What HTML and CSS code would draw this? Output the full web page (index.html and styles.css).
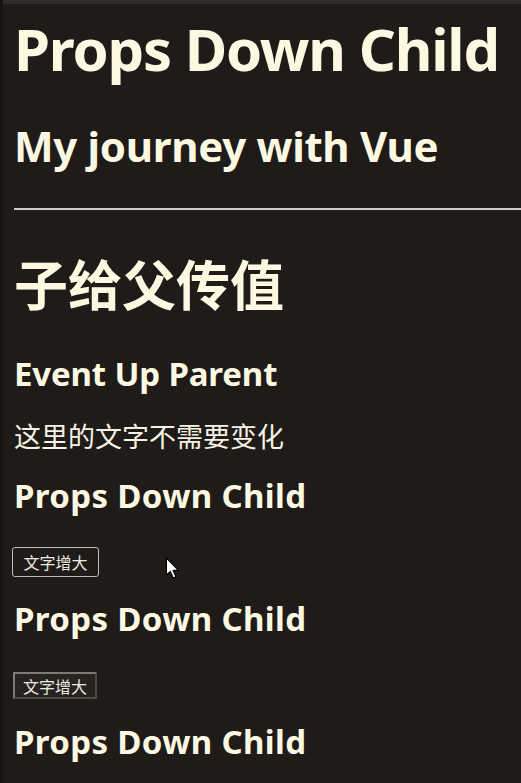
FILE: index.html
```html
<!DOCTYPE html>
<html lang="zh">
<head>
<meta charset="utf-8">
<title>Props Down Child</title>
<link rel="stylesheet" href="styles.css">
</head>
<body>
<div class="topbar"></div>
<main class="page">
  <h1 class="title">Props Down Child</h1>
  <h2 class="subtitle">My journey with Vue</h2>
  <hr class="rule">
  <h2 class="zh-title">子给父传值</h2>
  <h3 class="sec">Event Up Parent</h3>
  <p class="note">这里的文字不需要变化</p>
  <h3 class="sec child first">Props Down Child</h3>
  <button class="btn btn-round">文字增大</button>
  <h3 class="sec child">Props Down Child</h3>
  <button class="btn btn-square">文字增大</button>
  <h3 class="sec child">Props Down Child</h3>
</main>
<svg class="cursor" width="16" height="24" viewBox="0 0 14 22" aria-hidden="true">
  <path d="M1 1 L1 16.5 L4.6 13.2 L7.2 19.2 L9.6 18.2 L7.1 12.3 L12 12.3 Z" fill="#ffffff" stroke="#000000" stroke-width="1" stroke-linejoin="round"/>
</svg>
</body>
</html>
```

FILE: styles.css
```css
html, body {
  margin: 0;
  padding: 0;
  background: #1e1b18;
}
body {
  position: relative;
  min-height: 783px;
  overflow: hidden;
  font-family: "Noto Sans", "Noto Sans CJK SC", sans-serif;
  color: #fdf8e2;
  border-left: 3px solid #151413;
}
.topbar {
  height: 4px;
  background: #2c2b2a;
}
.page {
  padding-left: 11px;
  display: flex;
  flex-direction: column;
  align-items: flex-start;
}
.title {
  margin: 9.5px 0 0;
  font-size: 58px;
  line-height: 70px;
  font-weight: 700;
  letter-spacing: -1.2px;
}
.subtitle {
  margin: 37px 0 0;
  font-size: 42px;
  line-height: 50px;
  font-weight: 700;
  letter-spacing: -0.3px;
}
.rule {
  align-self: stretch;
  margin: 37px 0 0;
  border: 0;
  height: 2px;
  background: #cfcdc8;
}
.zh-title {
  margin: 43px 0 0;
  font-size: 54px;
  line-height: 64px;
  font-weight: 700;
}
.sec {
  margin: 37px 0 0;
  font-size: 33px;
  line-height: 40px;
  font-weight: 700;
  letter-spacing: -0.15px;
}
.note {
  margin: 27px 0 0;
  font-size: 27px;
  line-height: 32px;
  font-weight: 400;
  color: #f6f2e4;
}
.child {
  margin-top: 22.5px;
  letter-spacing: 0.35px;
}
.child.first {
  margin-top: 23px;
}
.btn {
  font-family: "Noto Sans CJK SC", sans-serif;
  font-size: 16px;
  color: #ece9e0;
  padding: 0;
  display: flex;
  align-items: center;
  justify-content: center;
}
.btn-round {
  margin: 31px 0 0 -2px;
  width: 87px;
  height: 30px;
  background: #1e1b18;
  border: 1px solid #bdbbb6;
  border-radius: 3px;
}
.btn-square {
  margin: 33px 0 0 -1px;
  width: 84px;
  height: 27px;
  background: #262321;
  border: 2px solid;
  border-color: #7c7b79 #4c4a48 #4c4a48 #7c7b79;
  border-radius: 0;
}
.cursor {
  position: absolute;
  left: 162px;
  top: 557px;
}
```
